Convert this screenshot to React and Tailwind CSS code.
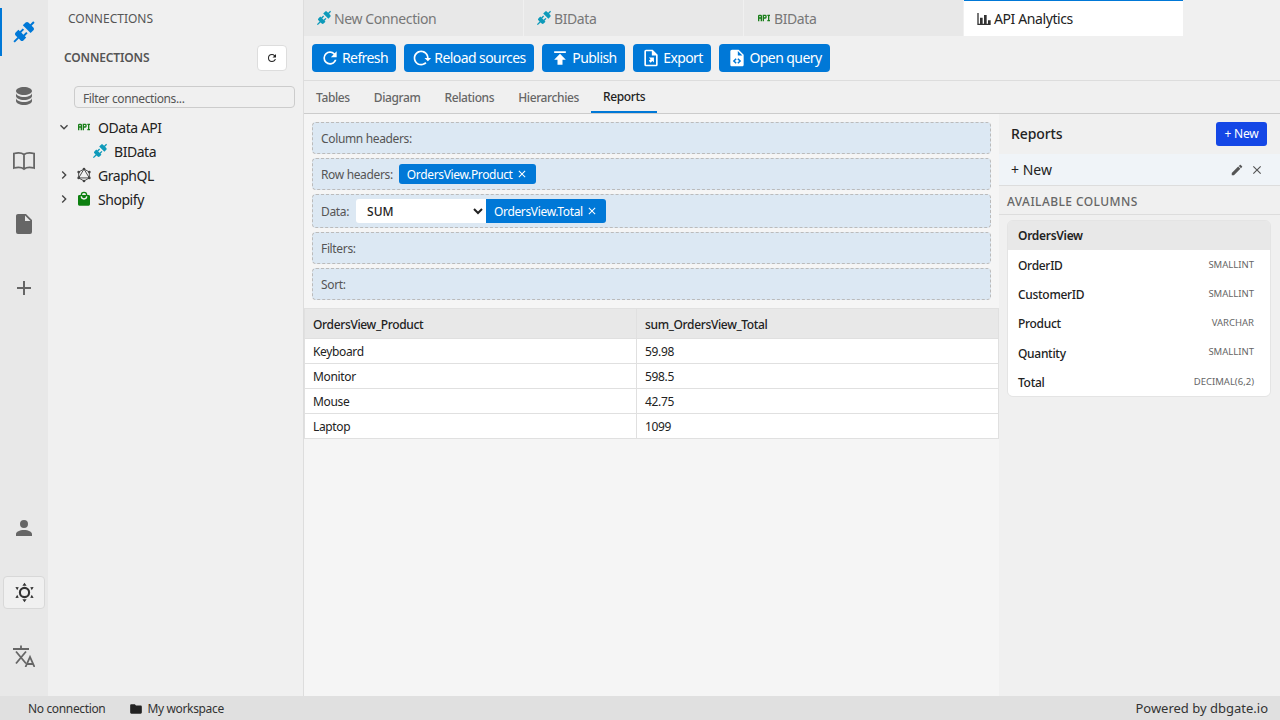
const P = {
  connection: "M21.4 7.5C22.2 8.3 22.2 9.6 21.4 10.3L18.6 13.1L10.8 5.3L13.6 2.5C14.4 1.7 15.7 1.7 16.4 2.5L18.2 4.3L21.2 1.3L22.6 2.7L19.6 5.7L21.4 7.5M15.6 13.3L14.2 11.9L11.4 14.7L9.3 12.6L12.1 9.8L10.7 8.4L7.9 11.2L6.4 9.8L3.6 12.6C2.8 13.4 2.8 14.7 3.6 15.4L5.4 17.2L1.4 21.2L2.8 22.6L6.8 18.6L8.6 20.4C9.4 21.2 10.7 21.2 11.4 20.4L14.2 17.6L12.8 16.2L15.6 13.3Z",
  database: "M12,3C7.58,3 4,4.79 4,7C4,9.21 7.58,11 12,11C16.42,11 20,9.21 20,7C20,4.79 16.42,3 12,3M4,9V12C4,14.21 7.58,16 12,16C16.42,16 20,14.21 20,12V9C20,11.21 16.42,13 12,13C7.58,13 4,11.21 4,9M4,14V17C4,19.21 7.58,21 12,21C16.42,21 20,19.21 20,17V14C20,16.21 16.42,18 12,18C7.58,18 4,16.21 4,14Z",
  file: "M13,9V3.5L18.5,9M6,2C4.89,2 4,2.89 4,4V20A2,2 0 0,0 6,22H18A2,2 0 0,0 20,20V8L14,2H6Z",
  plus: "M19,13H13V19H11V13H5V11H11V5H13V11H19V13Z",
  account: "M12,4A4,4 0 0,1 16,8A4,4 0 0,1 12,12A4,4 0 0,1 8,8A4,4 0 0,1 12,4M12,14C16.42,14 20,15.79 20,18V20H4V18C4,15.79 7.58,14 12,14Z",
  refresh: "M17.65,6.35C16.2,4.9 14.21,4 12,4A8,8 0 0,0 4,12A8,8 0 0,0 12,20C15.73,20 18.84,17.45 19.73,14H17.65C16.83,16.33 14.61,18 12,18A6,6 0 0,1 6,12A6,6 0 0,1 12,6C13.66,6 15.14,6.69 16.22,7.78L13,11H20V4L17.65,6.35Z",
  reload: "M2 12C2 16.97 6.03 21 11 21C13.39 21 15.68 20.06 17.4 18.4L15.9 16.9C14.63 18.25 12.86 19 11 19C4.76 19 1.64 11.46 6.05 7.05C10.46 2.64 18 5.77 18 12H15L19 16H19.1L23 12H20C20 7.03 15.97 3 11 3C6.03 3 2 7.03 2 12Z",
  publish: "M5,4V6H19V4H5M5,14H9V20H15V14H19L12,7L5,14Z",
  exportFile: "M6,2C4.89,2 4,2.9 4,4V20A2,2 0 0,0 6,22H18A2,2 0 0,0 20,20V8L14,2H6M6,4H13V9H18V20H6V4ZM9.5,11.5H15.5V17.5L13.6,15.6L11.6,17.6L9.4,15.4L11.4,13.4L9.5,11.5Z",
  fileCode: "M14 2H6C4.89 2 4 2.89 4 4V20C4 21.11 4.89 22 6 22H18C19.11 22 20 21.11 20 20V8L14 2M9.54 15.65L11.63 17.74L10.35 19L7 15.65L10.35 12.3L11.63 13.56L9.54 15.65M17 15.65L13.65 19L12.38 17.74L14.47 15.65L12.38 13.56L13.65 12.3L17 15.65M13 9V3.5L18.5 9H13Z",
  api: "M7 7H5A2 2 0 0 0 3 9V17H5V13H7V17H9V9A2 2 0 0 0 7 7M7 11H5V9H7M14 7H10V17H12V13H14A2 2 0 0 0 16 11V9A2 2 0 0 0 14 7M14 11H12V9H14M20 9V15H21V17H17V15H18V9H17V7H21V9Z",
  shopping: "M12,13A5,5 0 0,1 7,8H9A3,3 0 0,0 12,11A3,3 0 0,0 15,8H17A5,5 0 0,1 12,13M12,3A3,3 0 0,1 15,6H9A3,3 0 0,1 12,3M19,6H17A5,5 0 0,0 12,1A5,5 0 0,0 7,6H5C3.89,6 3,6.89 3,8V20A2,2 0 0,0 5,22H19A2,2 0 0,0 21,20V8C21,6.89 20.1,6 19,6Z",
  chart: "M22,21H2V3H4V19H6V10H10V19H12V6H16V19H18V14H22V21Z",
  pencil: "M20.71,7.04C21.1,6.65 21.1,6 20.71,5.63L18.37,3.29C18,2.9 17.35,2.9 16.96,3.29L15.12,5.12L18.87,8.87M3,17.25V21H6.75L17.81,9.93L14.06,6.18L3,17.25Z",
  close: "M19,6.41L17.59,5L12,10.59L6.41,5L5,6.41L10.59,12L5,17.59L6.41,19L12,13.41L17.59,19L19,17.59L13.41,12L19,6.41Z",
  down: "M7.41,8.58L12,13.17L16.59,8.58L18,10L12,16L6,10L7.41,8.58Z",
  right: "M8.59,16.58L13.17,12L8.59,7.41L10,6L16,12L10,18L8.59,16.58Z",
  folder: "M10,4H4C2.89,4 2,4.89 2,6V18A2,2 0 0,0 4,20H20A2,2 0 0,0 22,18V8C22,6.89 21.1,6 20,6H12L10,4Z",
};

function I({ d, className = "" }) {
  return (
    <svg viewBox="0 0 24 24" fill="currentColor" fillRule="evenodd" className={"shrink-0 " + className}>
      <path d={d} />
    </svg>
  );
}

function BookIcon() {
  return (
    <svg viewBox="0 0 24 24" fill="none" stroke="currentColor" strokeWidth="1.8" className="w-6 h-6 shrink-0">
      <path d="M12 6.5C10 5 6 4.5 1.9 5.5V20C6 19 10 19.5 12 21C14 19.5 18 19 22.1 20V5.5C18 4.5 14 5 12 6.5ZM12 6.5V21" />
    </svg>
  );
}

function ThemeIcon() {
  return (
    <svg viewBox="0 0 24 24" fill="currentColor" className="w-[23px] h-[23px] shrink-0">
      <circle cx="12" cy="12" r="4.8" fill="none" stroke="currentColor" strokeWidth="2.2" />
      <path d="M12 1.8L14.2 5H9.8ZM12 22.2L14.2 19H9.8Z" />
      <path d="M2.5 6.2L6 6.6L4.4 9.6ZM21.5 6.2L18 6.6L19.6 9.6ZM2.5 17.8L6 17.4L4.4 14.4ZM21.5 17.8L18 17.4L19.6 14.4Z" />
    </svg>
  );
}

function TranslateIcon() {
  return (
    <svg viewBox="0 0 22 22" fill="none" stroke="currentColor" strokeWidth="1.8" className="w-[22px] h-[22px] shrink-0">
      <path d="M8 0.5V4M0 4H16M3 6.5L13 18.5M13 6.5L3 18.5" />
      <path d="M12.5 22L17 12L21.5 22M14 19H20" />
    </svg>
  );
}

function GraphqlIcon() {
  return (
    <svg viewBox="0 0 24 24" fill="none" stroke="currentColor" strokeWidth="1.4" className="w-4 h-4 shrink-0 text-[#444] ml-1">
      <path d="M12 3L20 7.6V16.4L12 21L4 16.4V7.6ZM12 3L4 16.4H20Z" />
      <g fill="currentColor" stroke="none">
        <circle cx="12" cy="3" r="2" />
        <circle cx="20" cy="7.6" r="2" />
        <circle cx="20" cy="16.4" r="2" />
        <circle cx="12" cy="21" r="2" />
        <circle cx="4" cy="16.4" r="2" />
        <circle cx="4" cy="7.6" r="2" />
      </g>
    </svg>
  );
}

function Rail({ children, active }) {
  return (
    <div className={"relative h-16 flex items-center justify-center " + (active ? "text-[#0078d7]" : "text-[#666]")}>
      {active && <div className="absolute left-0 top-2 bottom-2 w-0.5 bg-[#0078d7]" />}
      {children}
    </div>
  );
}

function Tab({ icon, color, label }) {
  return (
    <div className="w-[220px] h-9 flex items-center gap-0.5 pl-3 bg-[#e8e8e8] border-r border-[#f0f0f0] text-[#777] text-[14px] tracking-[-0.4px]">
      <I d={icon} className={"w-4 h-4 " + color} />
      <span>{label}</span>
    </div>
  );
}

function Btn({ icon, label, cls }) {
  return (
    <div className={"h-7 flex items-center gap-0.5 justify-center bg-[#0078d7] text-white rounded-[4px] text-[14px] tracking-[-0.58px] " + cls}>
      <I d={icon} className="w-5 h-5" />
      <span className="pb-0.5">{label}</span>
    </div>
  );
}

function Zone({ children, h = "h-8" }) {
  return (
    <div className={"flex items-center gap-1.5 px-2 rounded-[4px] border border-dashed border-[#bbb] bg-[#dce8f3] text-[12px] tracking-[-0.35px] text-[#555] " + h}>
      {children}
    </div>
  );
}

function Chip({ label, cls = "h-5 rounded-[3px]" }) {
  return (
    <div className={"flex items-center gap-[3px] px-2 bg-[#0078d7] text-white text-[12px] tracking-[-0.35px] " + cls}>
      <span className="pt-0.5">{label}</span>
      <I d={P.close} className="w-3 h-3" />
    </div>
  );
}

function Row({ a, b, head }) {
  const base = head ? "bg-[#e8e8e8] font-medium h-[30px]" : "bg-white h-[25px]";
  return (
    <div className={"flex border border-t-0 border-[#e0e0e0] text-[12px] tracking-[-0.35px] text-[#222] items-stretch " + base}>
      <div className="w-[332px] flex items-center px-2 pt-0.5 border-r border-[#e0e0e0]">{a}</div>
      <div className="flex-1 flex items-center px-2 pt-0.5">{b}</div>
    </div>
  );
}

function Col({ name, type }) {
  return (
    <div className="h-[29.3px] flex items-center justify-between pl-2.5 pr-2 bg-white">
      <span className="text-[12px] font-medium tracking-[-0.3px] text-[#222] pt-0.5">{name}</span>
      <span className="text-[9.5px] text-[#666] pr-2">{type}</span>
    </div>
  );
}

export default function App() {
  return (
    <div className="w-[1280px] h-[720px] overflow-hidden flex flex-col bg-[#f0f0f0] font-['Noto_Sans',sans-serif] text-[#222]">
      <div className="flex-1 flex min-h-0">
        <div className="w-12 bg-[#e8e8e8] flex flex-col">
          <Rail active><I d={P.connection} className="w-6 h-6" /></Rail>
          <Rail><I d={P.database} className="w-6 h-6" /></Rail>
          <Rail><BookIcon /></Rail>
          <Rail><I d={P.file} className="w-6 h-6" /></Rail>
          <Rail><I d={P.plus} className="w-6 h-6" /></Rail>
          <div className="mt-auto flex flex-col pb-2">
            <Rail><I d={P.account} className="w-6 h-6" /></Rail>
            <div className="h-16 flex items-center justify-center">
              <div className="w-[42px] h-[33px] flex items-center justify-center rounded-[4px] border border-[#d8d8d8] bg-[#f0f0f0] text-[#333]">
                <ThemeIcon />
              </div>
            </div>
            <Rail><TranslateIcon /></Rail>
          </div>
        </div>

        <div className="w-[256px] bg-[#f0f0f0] border-r border-[#ddd] flex flex-col">
          <div className="h-9 pl-5 pt-0.5 flex items-center text-[12px] text-[#555]">CONNECTIONS</div>
          <div className="h-11 pl-4 pr-4 flex items-center justify-between">
            <span className="text-[12px] font-semibold tracking-[-0.15px] text-[#555]">CONNECTIONS</span>
            <div className="w-[30px] h-[26px] flex items-center justify-center bg-white border border-[#ddd] rounded-[4px]">
              <I d={P.refresh} className="w-3 h-3" />
            </div>
          </div>
          <div className="ml-[26px] mr-2 mt-1.5 h-[22px] px-2 pt-1 flex items-center rounded-[4px] border border-[#ccc] text-[12px] tracking-[-0.38px] text-[#555]">Filter connections...</div>
          <div className="mt-[7px] flex flex-col text-[14px] tracking-[-0.45px]">
            <div className="h-6 flex items-center pl-2"><I d={P.down} className="w-4 h-4 text-[#444]" /><I d={P.api} className="w-4 h-4 text-[#1a7f1a] ml-1" /><span className="ml-1.5">OData API</span></div>
            <div className="h-6 flex items-center pl-11"><I d={P.connection} className="w-4 h-4 text-[#0e9aba]" /><span className="ml-1.5">BIData</span></div>
            <div className="h-6 flex items-center pl-2"><I d={P.right} className="w-4 h-4 text-[#444]" /><GraphqlIcon /><span className="ml-1.5">GraphQL</span></div>
            <div className="h-6 flex items-center pl-2"><I d={P.right} className="w-4 h-4 text-[#444]" /><I d={P.shopping} className="w-4 h-4 text-[#0d8010] ml-1" /><span className="ml-1.5">Shopify</span></div>
          </div>
        </div>

        <div className="flex-1 flex flex-col min-w-0">
          <div className="h-9 flex">
            <Tab icon={P.connection} color="text-[#0e9aba]" label="New Connection" />
            <Tab icon={P.connection} color="text-[#0e9aba]" label="BIData" />
            <Tab icon={P.api} color="text-[#1a7f1a]" label="BIData" />
            <div className="w-[219px] h-9 flex items-center gap-0.5 pl-3 bg-white border-t border-[#0078d7] text-[14px] tracking-[-0.4px] text-[#222]">
              <I d={P.chart} className="w-4 h-4 text-[#333]" /><span>API Analytics</span>
            </div>
          </div>
          <div className="h-[45px] flex items-center gap-2 px-2 border-b border-[#ddd]">
            <Btn icon={P.refresh} label="Refresh" cls="w-[84px]" />
            <Btn icon={P.reload} label="Reload sources" cls="w-[130px]" />
            <Btn icon={P.publish} label="Publish" cls="w-[83px]" />
            <Btn icon={P.exportFile} label="Export" cls="w-[78px]" />
            <Btn icon={P.fileCode} label="Open query" cls="w-[111px]" />
          </div>
          <div className="h-[33px] flex items-stretch border-b border-[#ccc] text-[12px] font-medium tracking-[-0.38px] text-[#666]">
            <div className="px-3 pt-0.5 flex items-center">Tables</div>
            <div className="px-3 pt-0.5 flex items-center">Diagram</div>
            <div className="px-3 pt-0.5 flex items-center">Relations</div>
            <div className="px-3 pt-0.5 flex items-center">Hierarchies</div>
            <div className="px-3 pt-0.5 flex items-center text-[#222] border-b-2 border-[#0078d7]">Reports</div>
          </div>
          <div className="flex-1 flex min-h-0">
            <div className="w-[695px] bg-[#f5f5f5] flex flex-col">
              <div className="p-2 flex flex-col gap-1">
                <Zone><span className="pt-0.5">Column headers:</span></Zone>
                <Zone><span className="pt-0.5">Row headers:</span><Chip label="OrdersView.Product" /></Zone>
                <Zone h="h-[34px]">
                  <span className="pt-0.5 pr-px">Data:</span>
                  <div className="flex">
                    <select defaultValue="SUM" className="w-[130px] h-6 px-[7px] bg-white rounded-l-[3px] text-[12px] tracking-normal text-[#222] font-medium">
                      <option>SUM</option>
                    </select>
                    <Chip label="OrdersView.Total" cls="h-6 rounded-r-[3px]" />
                  </div>
                </Zone>
                <Zone><span className="pt-0.5">Filters:</span></Zone>
                <Zone><span className="pt-0.5">Sort:</span></Zone>
              </div>
              <div className="flex flex-col border-t border-[#e0e0e0]">
                <Row head a="OrdersView_Product" b="sum_OrdersView_Total" />
                <Row a="Keyboard" b="59.98" />
                <Row a="Monitor" b="598.5" />
                <Row a="Mouse" b="42.75" />
                <Row a="Laptop" b="1099" />
              </div>
            </div>
            <div className="flex-1 bg-[#f0f0f0] flex flex-col">
              <div className="h-10 flex items-center justify-between pl-3 pr-[13px]">
                <span className="text-[14px] font-medium tracking-[-0.1px] pb-0.5">Reports</span>
                <div className="h-6 w-[51px] flex items-center justify-center bg-blue-700 text-white text-[12px] tracking-[-0.2px] rounded-[3px]">+ New</div>
              </div>
              <div className="h-8 flex items-center justify-between pl-3 pr-4 bg-[#f0f4f8] border-b border-[#ddd] text-[14px]">
                <span>+ New</span>
                <div className="flex items-center gap-1.5 text-[#555]"><I d={P.pencil} className="w-3.5 h-3.5" /><I d={P.close} className="w-3.5 h-3.5" /></div>
              </div>
              <div className="h-[29px] flex items-center pl-2 pt-1 border-b border-[#ddd] text-[12px] font-medium tracking-[0.42px] text-[#666]">AVAILABLE COLUMNS</div>
              <div className="ml-2 mr-[9px] mt-[5px] rounded-[6px] border border-[#e4e4e4] overflow-hidden">
                <div className="h-[29px] flex items-center px-2.5 bg-[#e8e8e8] text-[12px] font-semibold tracking-[-0.3px]">OrdersView</div>
                <Col name="OrderID" type="SMALLINT" />
                <Col name="CustomerID" type="SMALLINT" />
                <Col name="Product" type="VARCHAR" />
                <Col name="Quantity" type="SMALLINT" />
                <Col name="Total" type="DECIMAL(6,2)" />
              </div>
            </div>
          </div>
        </div>
      </div>
      <div className="h-6 bg-[#e0e0e0] flex items-center justify-between pl-7 pr-3 pt-0.5 text-[12px] tracking-[-0.35px] text-[#333]">
        <div className="flex items-center gap-6">
          <span>No connection</span>
          <span className="flex items-center gap-1"><I d={P.folder} className="w-3.5 h-3.5 text-[#222]" />My workspace</span>
        </div>
        <span className="text-[13px] tracking-normal">Powered by dbgate.io</span>
      </div>
    </div>
  );
}
